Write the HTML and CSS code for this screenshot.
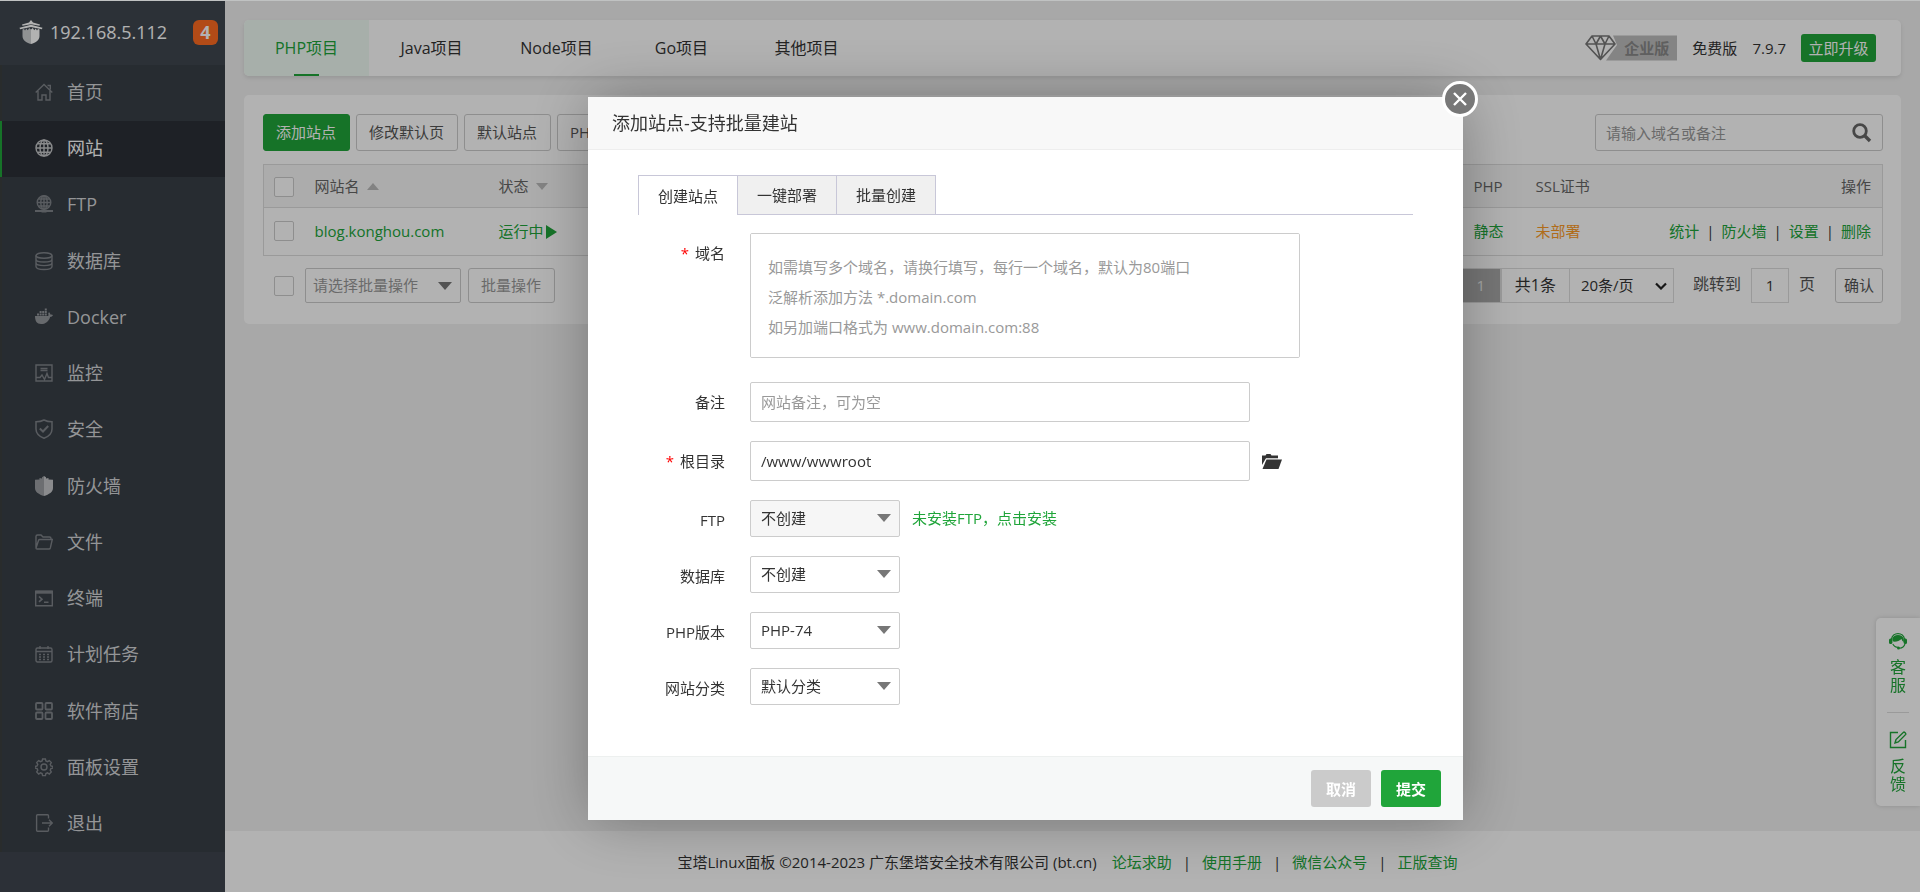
FILE: index.html
```html
<!DOCTYPE html>
<html lang="zh-CN">
<head>
<meta charset="utf-8">
<title>宝塔Linux面板</title>
<link rel="stylesheet" href="styles.css">
</head>
<body>
<div class="app">
  <aside class="sidebar">
    <div class="host">
      <svg class="host-logo" viewBox="0 0 24 24" fill="#fff"><path d="M12 0l2 2.500 7 2-.5 1.200L12 4.200 3.500 5.700 3 4.500l7-2z"/><path d="M12 4.800l10.500 2.700 1 .2-.6 1.500L12 7 1.100 9.200.5 7.700l1-.2z"/><path d="M3.500 9.400L5 9l1 1.500L7.300 8.600l1.500 1.600L10.200 8 12 9.500V24c-5-1.300-8.500-4-8.500-8z" opacity=".75"/><path d="M12 9.500L13.800 8l1.400 2.200 1.500-1.600L18 10.500 19 9l1.500.4V16c0 4-3.500 6.700-8.500 8z"/></svg>
      <span class="host-ip">192.168.5.112</span>
      <span class="host-badge">4</span>
    </div>
    <ul class="menu">
      <li><a href="#"><svg viewBox="0 0 18 18"><path d="M.7 9.500L9 1.500l8.300 8M3 8v9h4v-5h4v5h4V8M12.500 2.500h2.800v4"/></svg>首页</a></li>
      <li class="current"><a href="#"><svg viewBox="0 0 18 18"><circle cx="9" cy="9" r="8"/><ellipse cx="9" cy="9" rx="4" ry="8"/><path d="M9 1v16M1 9h16M2.500 4.800h13M2.500 13.200h13"/></svg>网站</a></li>
      <li><a href="#"><svg viewBox="0 0 18 18"><circle cx="9" cy="7.500" r="6.800"/><ellipse cx="9" cy="7.500" rx="3.200" ry="6.800"/><path d="M9 .7v13M2.200 7.500h13.600M3.500 4h11M3.500 11h11"/><path d="M0 16h18M6.500 16.500h5" stroke-width="2"/></svg>FTP</a></li>
      <li><a href="#"><svg viewBox="0 0 18 18"><ellipse cx="9" cy="3.500" rx="8" ry="2.800"/><path d="M1 3.500v11c0 4 16 4 16 0v-11M1 7.200c0 3.800 16 3.800 16 0M1 10.800c0 3.800 16 3.800 16 0"/></svg>数据库</a></li>
      <li><a href="#"><svg class="solid" viewBox="0 0 18 18"><path d="M0 8h13.200c.5-.8.2-2 0-3l1-.8c.8.800 1.200 1.600 1.200 2.400 1-.2 2 0 2.600.4-.5 1.200-1.500 1.900-2.900 1.900C13.700 13.500 10.500 16 6 16 1.800 16 0 13 0 8z"/><path d="M2 5.500h2v2H2zM4.600 5.500h2v2h-2zM7.200 5.500h2v2h-2zM9.800 5.500h2v2h-2zM4.600 3h2v2h-2zM7.200 3h2v2h-2zM9.800 3h2v2h-2zM9.800.5h2v2h-2z"/></svg>Docker</a></li>
      <li><a href="#"><svg viewBox="0 0 18 18"><path d="M1 1h16v16H1zM5.500 4.500h7M5.500 6.500h7M1 13.500h4l2-2.500 2.500 4.500L12 9.500l1.500 4H17"/></svg>监控</a></li>
      <li><a href="#"><svg viewBox="0 0 18 20"><path d="M9 1c2.500 1.300 5 1.800 8 1.800V10c0 4.500-3.500 7.500-8 9.200C4.500 17.500 1 14.500 1 10V2.800C4 2.800 6.500 2.300 9 1z" stroke-width="1.500"/><path d="M4.800 9.500l3.200 3 5.200-5.500" stroke-width="2"/></svg>安全</a></li>
      <li><a href="#"><svg class="solid bright" viewBox="0 0 18 20"><path d="M9 0L7 1.200V2.500L4.500 2v1.500L0 3.800V12c0 4 4 6.500 9 8z" opacity=".7"/><path d="M9 0l2 1.200V2.500l2.500-.5v1.500l4.500.3V12c0 4-4 6.500-9 8z"/></svg>防火墙</a></li>
      <li><a href="#"><svg viewBox="0 0 18 18"><path d="M1 14.500V3.500c0-1 .5-1.500 1.500-1.500H6l2 2h6.500c.8 0 1.500.6 1.500 1.500v1M1 15l2.500-7.500c.2-.6.600-1 1.200-1h12.600l-2 8.500c-.2.700-.6 1-1.300 1H2c-.6 0-1-.4-1-1z"/></svg>文件</a></li>
      <li><a href="#"><svg viewBox="0 0 18 18"><path d="M.7 2.200h16.600v14.600H.7z"/><path d="M.7 3.200h16.600" stroke-width="3"/><path d="M4 7.500l3 2.700-3 2.700M9 13.200h4.500" stroke-width="1.600"/></svg>终端</a></li>
      <li><a href="#"><svg viewBox="0 0 18 18"><rect x="1" y="3" width="16" height="14" rx="1.500"/><path d="M1 6.500h16M5 1v3M13 1v3"/><path d="M4 9.500h10M4 12h10M4 14.500h10" stroke-dasharray="2 2"/></svg>计划任务</a></li>
      <li><a href="#"><svg viewBox="0 0 18 18"><g stroke-width="1.800"><rect x="1" y="1" width="6.500" height="6.500" rx="1"/><rect x="10.500" y="1" width="6.500" height="6.500" rx="1"/><rect x="1" y="10.500" width="6.500" height="6.500" rx="1"/><rect x="10.500" y="10.500" width="6.500" height="6.500" rx="1"/></g></svg>软件商店</a></li>
      <li><a href="#"><svg viewBox="0 0 18 18"><circle cx="9" cy="9" r="3"/><path d="M7.600 1h2.800l.5 2 1.600.7 1.800-1.100 2 2-1.100 1.800.7 1.600 2 .5v1.600l-2 .5-.7 1.600 1.100 1.800-2 2-1.800-1.100-1.600.7-.5 2H7.600l-.5-2-1.600-.7-1.800 1.100-2-2 1.100-1.800-.7-1.600-2-.5V8.500l2-.5.7-1.600-1.100-1.800 2-2 1.800 1.100L7.100 3z"/></svg>面板设置</a></li>
      <li><a href="#"><svg viewBox="0 0 18 18"><path d="M13.500 4.500V1.700c0-.6-.3-.9-.9-.9H2.500c-.6 0-.9.300-.9.900v14.600c0 .6.300.9.900.9h10.100c.6 0 .9-.3.900-.9v-2.800M7 9h10M14 5.800L17.200 9 14 12.200"/></svg>退出</a></li>
    </ul>
  </aside>

  <div class="page">
    <main class="content">
      <header class="topbar">
        <nav class="project-tabs">
          <a class="active" href="#">PHP项目</a>
          <a href="#">Java项目</a>
          <a href="#">Node项目</a>
          <a href="#">Go项目</a>
          <a href="#">其他项目</a>
        </nav>
        <div class="version">
          <span class="edition">
            <svg viewBox="0 0 92 26"><path d="M28 .5h64v25H21l11-15.500z" fill="#bdbdbd"/><path d="M7 1h17l6 8-14.500 15.500L1 9zM1 9h29M7 1l4 8 4.500 15.500L20 9l4-8M11 9l4.500-8L20 9" fill="none" stroke="#777" stroke-width="1.600" stroke-linejoin="round"/></svg>
            <span>企业版</span>
          </span>
          <span>免费版</span>
          <span>7.9.7</span>
          <button class="upgrade" type="button">立即升级</button>
        </div>
      </header>

      <section class="card">
        <div class="toolbar">
          <div class="toolbar-buttons">
            <button class="btn primary" type="button">添加站点</button>
            <button class="btn" type="button">修改默认页</button>
            <button class="btn" type="button">默认站点</button>
            <button class="btn" type="button">PHP</button>
          </div>
          <form class="search">
            <input type="text" placeholder="请输入域名或备注" aria-label="请输入域名或备注">
            <button type="button" aria-label="搜索"><svg viewBox="0 0 20 20"><circle cx="8" cy="8" r="6.300" fill="none" stroke="#666" stroke-width="2.800"/><path d="M12.500 12.500L18 18" stroke="#666" stroke-width="3.400"/></svg></button>
          </form>
        </div>

        <table class="sites">
          <colgroup><col class="col-check"><col class="col-name"><col class="col-status"><col><col class="col-php"><col class="col-ssl"><col class="col-actions"></colgroup>
          <thead>
            <tr>
              <th><input type="checkbox" aria-label="全选"></th>
              <th>网站名<i class="sort up"></i></th>
              <th>状态<i class="sort"></i></th>
              <th></th>
              <th>PHP</th>
              <th>SSL证书</th>
              <th class="actions">操作</th>
            </tr>
          </thead>
          <tbody>
            <tr>
              <td><input type="checkbox" aria-label="blog.konghou.com"></td>
              <td><a href="#">blog.konghou.com</a></td>
              <td><a href="#">运行中<i class="play"></i></a></td>
              <td></td>
              <td><a href="#">静态</a></td>
              <td><a class="warn" href="#">未部署</a></td>
              <td class="actions"><div class="links"><a href="#">统计</a>|<a href="#">防火墙</a>|<a href="#">设置</a>|<a href="#">删除</a></div></td>
            </tr>
          </tbody>
        </table>

        <div class="table-foot">
          <div class="batch">
            <input type="checkbox" aria-label="批量选择">
            <span class="select batch-select"><select aria-label="批量操作"><option>请选择批量操作</option></select></span>
            <button class="btn muted" type="button">批量操作</button>
          </div>
          <div class="pager">
            <span class="current-page">1</span>
            <span class="total">共1条</span>
            <span class="page-size"><select aria-label="每页条数"><option>20条/页</option></select><svg viewBox="0 0 12 8"><path d="M1 1.500l5 5 5-5" fill="none" stroke="#222" stroke-width="2.200"/></svg></span>
            <label for="jump">跳转到</label>
            <input id="jump" type="text" value="1">
            <span class="unit">页</span>
            <button class="btn confirm" type="button">确认</button>
          </div>
        </div>
      </section>
    </main>

    <footer class="footer">
      <span>宝塔Linux面板 ©2014-2023 广东堡塔安全技术有限公司 (bt.cn)</span>
      <a href="#">论坛求助</a><i>|</i><a href="#">使用手册</a><i>|</i><a href="#">微信公众号</a><i>|</i><a href="#">正版查询</a>
    </footer>
  </div>
</div>

<div class="helper">
  <a href="#"><svg viewBox="0 0 18 18"><path d="M2.500 7a6.600 6.600 0 0 1 13 0" fill="none" stroke="#20a53a" stroke-width="1.300"/><path d="M3.200 7a6 5.500 0 0 1 11.600 0v3c-1-.5-1.800-1.500-2.300-3C10.500 9 7 10 4 9.500z" fill="#20a53a"/><rect y="6.500" width="3.400" height="5.500" rx="1.500" fill="#20a53a"/><rect x="14.600" y="6.500" width="3.400" height="5.500" rx="1.500" fill="#20a53a"/><path d="M3.800 12c1 2 3 3.300 5.200 3.300M16 12c-.8 2.500-3 4-5.500 4.300" fill="none" stroke="#20a53a" stroke-width="1.100"/><circle cx="9.500" cy="16" r="1.500" fill="#20a53a"/></svg><span>客服</span></a>
  <a href="#"><svg viewBox="0 0 18 18" fill="none" stroke="#20a53a" stroke-width="1.400"><path d="M9 1.500H1.500v15h15V9"/><path d="M6 12l1-3.500 7.500-7.300c.8-.6 2.800 1.300 2.200 2.200L9.300 11z"/></svg><span>反馈</span></a>
</div>

<div class="shade"></div>

<div class="dialog" role="dialog" aria-label="添加站点">
  <button class="close" type="button" aria-label="关闭"><svg viewBox="0 0 14 14"><path d="M1 1l12 12M13 1L1 13" stroke="#fff" stroke-width="2.400"/></svg></button>
  <div class="dialog-title">添加站点-支持批量建站</div>
  <div class="dialog-body">
    <div class="dialog-tabs">
      <button class="active" type="button">创建站点</button>
      <button type="button">一键部署</button>
      <button type="button">批量创建</button>
    </div>
    <form class="form">
      <div class="row domain-row"><label for="domain"><em>*</em>域名</label><textarea id="domain" placeholder="如需填写多个域名，请换行填写，每行一个域名，默认为80端口&#10;泛解析添加方法 *.domain.com&#10;如另加端口格式为 www.domain.com:88"></textarea></div>
      <div class="row"><label for="note">备注</label><input id="note" type="text" placeholder="网站备注，可为空"></div>
      <div class="row"><label for="root"><em>*</em>根目录</label><input id="root" type="text" value="/www/wwwroot"><button class="browse" type="button" aria-label="选择目录"><svg viewBox="0 0 20 15" fill="#333"><path d="M0 11V1.500h3.500L4.500 0h4l1 1.500H16v2.700H4z"/><path d="M4.500 5.500H20L16.500 15H.5z"/></svg></button></div>
      <div class="row"><label for="ftp">FTP</label><span class="select disabled"><select id="ftp"><option>不创建</option></select></span><a class="hint" href="#">未安装FTP，点击安装</a></div>
      <div class="row"><label for="db">数据库</label><span class="select"><select id="db"><option>不创建</option></select></span></div>
      <div class="row"><label for="php">PHP版本</label><span class="select"><select id="php"><option>PHP-74</option></select></span></div>
      <div class="row"><label for="type">网站分类</label><span class="select"><select id="type"><option>默认分类</option></select></span></div>
    </form>
  </div>
  <div class="dialog-actions">
    <button class="cancel" type="button">取消</button>
    <button class="submit" type="button">提交</button>
  </div>
</div>
</body>
</html>
```

FILE: styles.css
```css
* { box-sizing: border-box; }

body {
  margin: 0;
  border-top: 1px solid #c0c2c2;
  background: #f1f1f1;
  color: #333;
  font: 15px/20px "Open Sans", "Noto Sans CJK SC", sans-serif;
}

button, input, select, textarea { font: inherit; color: inherit; margin: 0; }
button { cursor: pointer; padding: 0; border: 0; background: none; }
a { color: #20a53a; text-decoration: none; }
i, em { font-style: normal; }
svg { display: block; }
::placeholder { color: #999; opacity: 1; }

.app { display: flex; min-height: calc(100vh - 1px); }

/* Sidebar */
.sidebar { flex: 0 0 225px; background: #3f4550; }
.host {
  display: flex;
  align-items: center;
  height: 64px;
  padding: 0 7px 2px 19px;
  background: #3f4750;
  color: #fff;
  font-size: 18px;
}
.host-logo { width: 24px; height: 24px; margin-right: 7px; }
.host-badge {
  width: 25px;
  margin-left: auto;
  border-radius: 6px;
  background: #ff6c22;
  font-weight: 700;
  line-height: 25px;
  text-align: center;
}
.menu { margin: 0; padding: 0; list-style: none; background: #383f47; }
.menu li { height: 56px; border-left: 2px solid #3c403f; }
.menu li:nth-child(4n) { height: 57px; }
.menu a {
  display: flex;
  align-items: center;
  gap: 14px;
  height: 100%;
  padding: 0 0 2px 33px;
  color: #d4d6d8;
  font-size: 18px;
}
.menu svg { width: 18px; height: 20px; fill: none; stroke: #80858a; stroke-width: 1.400; }
.menu svg.solid { fill: #94989c; stroke: none; }
.menu svg.bright { fill: #c6c8ca; }
.menu .current { background: #2c3037; border-left-color: #20a53a; }
.menu .current a { color: #fff; }
.menu .current svg { stroke: #c4c6c8; }

/* Main area */
.page { display: flex; flex: 1; flex-direction: column; min-width: 0; }
.content { display: flex; flex: 1; flex-direction: column; gap: 19px; padding: 19px 19px 0; }
.topbar {
  display: flex;
  justify-content: space-between;
  height: 56px;
  padding-right: 25px;
  overflow: hidden;
  border-radius: 5px;
  background: #fff;
  box-shadow: 0 2px 4px rgba(0, 0, 0, .1);
}
.project-tabs { display: flex; font-size: 16px; }
.project-tabs a {
  display: flex;
  flex-direction: column;
  align-items: center;
  width: 125px;
  color: #333;
  line-height: 56px;
}
.project-tabs .active { background: #f0fbf4; color: #20a53a; }
.project-tabs .active::after { content: ""; width: 25px; height: 2px; margin-top: -2px; background: #20a53a; }
.version { display: flex; align-items: center; gap: 15px; }
.edition { display: grid; align-items: center; width: 92px; }
.edition > * { grid-area: 1 / 1; }
.edition span { padding-left: 39px; color: #888; font-weight: 700; }
.upgrade { width: 75px; height: 28px; border-radius: 3px; background: #20a53a; color: #fff; }

.card { padding: 19px 18px 21px 19px; border-radius: 5px; background: #fff; }
.toolbar, .table-foot { display: flex; justify-content: space-between; }
.toolbar-buttons { display: flex; gap: 6px; }
.btn {
  height: 37px;
  padding: 0 13px 2px 12px;
  border: 1px solid #ccc;
  border-radius: 3px;
  background: #fff;
  color: #555;
}
.btn.primary { border-color: #20a53a; background: #20a53a; color: #fff; }
.btn.muted { height: 35px; color: #999; }
.search { display: flex; align-items: center; width: 288px; height: 37px; border: 1px solid #ccc; border-radius: 3px; }
.search input { flex: 1; min-width: 0; height: 100%; padding: 0 10px; border: 0; outline: 0; background: none; }
.search button { padding-right: 10px; }
.search svg { width: 20px; height: 20px; }

.sites { width: 100%; margin: 13px 0 12px; border: 1px solid #ddd; border-collapse: collapse; table-layout: fixed; }
.sites th, .sites td { padding: 0 10px; text-align: left; white-space: nowrap; }
.sites th { height: 43px; background: #f6f6f6; color: #666; font-weight: 400; }
.sites td { height: 48px; padding-bottom: 2px; border-top: 1px solid #ddd; }
.sites input { vertical-align: middle; }
.sites .actions { padding-right: 11px; text-align: right; }
.col-check { width: 41px; }
.col-name { width: 184px; }
.col-status { width: 120px; }
.col-php { width: 62px; }
.col-ssl { width: 100px; }
.col-actions { width: 257px; }
.sites .warn { color: #fc9b27; }
.links { display: flex; justify-content: flex-end; gap: 7px; }
.sort {
  display: inline-block;
  margin-left: 7px;
  border: 6px solid transparent;
  border-top: 7px solid #bbb;
  border-bottom: 0;
  vertical-align: 2px;
}
.sort.up { border-top: 0; border-bottom: 7px solid #bbb; }
.play {
  display: inline-block;
  margin-left: 2px;
  border: 7px solid transparent;
  border-left: 11px solid #20a53a;
  border-right: 0;
  vertical-align: -2px;
}

input[type="checkbox"] {
  width: 20px;
  height: 20px;
  border: 1px solid #ccc;
  border-radius: 2px;
  background: #fff;
  appearance: none;
}
.batch { display: flex; align-items: center; gap: 7px; padding-left: 11px; }
.batch input { margin-right: 4px; }
.pager { display: flex; height: 35px; line-height: 33px; }
.pager > * { border: 1px solid #ddd; }
.current-page { width: 40px; background: #aaa; color: #eee; text-align: center; }
.total { padding: 0 13px; border-right: 0; font-size: 16px; }
.page-size { display: flex; align-items: center; width: 105px; padding-right: 6px; }
.page-size select { flex: 1; border: 0; background: none; appearance: none; padding-left: 11px; }
.page-size svg { width: 12px; }
.pager label, .pager .unit { border: 0; color: #555; font-size: 16px; }
.pager label { margin: 0 10px 0 19px; }
.pager input { width: 38px; background: #fff; text-align: center; }
.pager .unit { margin: 0 20px 0 10px; }
.btn.confirm { height: 35px; padding: 0 8px; border-color: #ccc; }

.footer {
  display: flex;
  align-items: center;
  justify-content: center;
  gap: 11px;
  height: 61px;
  padding-right: 10px;
  background: #fff;
}
.footer span { margin-right: 4px; }

/* Drop-downs with a filled triangle */
.select { position: relative; display: flex; width: 150px; height: 37px; border: 1px solid #ccc; border-radius: 2px; background: #fff; }
.select select { width: 100%; padding: 0 10px 2px; border: 0; background: none; appearance: none; }
.select::after {
  content: "";
  position: absolute;
  top: 13px;
  right: 8px;
  border: 7px solid transparent;
  border-top: 8px solid #777;
  border-bottom: 0;
  pointer-events: none;
}
.select.disabled { background: #f6f6f6; }
.batch-select { width: 156px; height: 35px; color: #999; }
.batch-select select { padding: 0 7px 2px; }

/* Contact strip on the right edge */
.helper {
  position: fixed;
  right: 0;
  bottom: 86px;
  width: 44px;
  padding: 0 11px;
  border-radius: 5px 0 0 5px;
  background: #fff;
  box-shadow: 0 0 5px rgba(0, 0, 0, .15);
}
.helper a {
  display: flex;
  flex-direction: column;
  align-items: center;
  gap: 8px;
  height: 94px;
  padding-top: 14px;
  font-size: 16px;
  line-height: 18px;
}
.helper a + a { padding-top: 18px; border-top: 1px solid #ddd; }
.helper span { width: 16px; }
.helper svg { width: 18px; height: 18px; }

.shade { position: fixed; inset: 1px 0 0; background: rgba(0, 0, 0, .3); }

/* Dialog */
.dialog {
  position: fixed;
  top: 97px;
  left: 588px;
  width: 875px;
  border-radius: 2px;
  background: #fff;
  box-shadow: 1px 1px 62px rgba(0, 0, 0, .3);
}
.dialog-title {
  height: 53px;
  padding-left: 24px;
  border-bottom: 1px solid #eee;
  background: #f8f8f8;
  font-size: 18px;
  line-height: 53px;
}
.close {
  position: absolute;
  top: -16px;
  right: -15px;
  display: grid;
  place-items: center;
  width: 36px;
  height: 36px;
  border: 3px solid #fff;
  border-radius: 50%;
  background: #787878;
}
.close svg { width: 14px; }
.dialog-body { padding: 25px 50px 51px; }
.dialog-tabs { display: flex; height: 40px; margin-bottom: 18px; border-bottom: 1px solid #c8c7d8; }
.dialog-tabs button {
  width: 99px;
  height: 39px;
  border: 1px solid #c8c7d8;
  border-width: 1px 1px 0 0;
  background: #f0f0f0;
}
.dialog-tabs .active { width: 100px; height: 40px; border-left-width: 1px; background: #fff; }

.form { display: flex; flex-direction: column; gap: 19px; }
.row { display: flex; align-items: flex-start; }
.row label { width: 87px; height: 37px; margin-right: 25px; line-height: 40px; text-align: right; }
.row em { margin-right: 6px; color: #f00; }
.row input { width: 500px; height: 40px; padding: 0 10px; }
.row input, .row textarea { border: 1px solid #ccc; border-radius: 2px; background: #fff; }
.domain-row { margin-bottom: 5px; }
.row textarea { width: 550px; height: 125px; padding: 18px 17px; line-height: 30px; resize: none; }
.browse { height: 40px; margin-left: 12px; }
.browse svg { width: 20px; height: 15px; }
.hint { margin-left: 12px; line-height: 37px; }

.dialog-actions {
  display: flex;
  justify-content: flex-end;
  gap: 10px;
  padding: 13px 22px;
  border-top: 1px solid #edf0ef;
  background: #f6f8f8;
}
.dialog-actions button { width: 60px; height: 37px; border-radius: 3px; color: #fff; font-weight: 700; }
.cancel { background: #cbcbcb; }
.submit { background: #20a53a; }
```
